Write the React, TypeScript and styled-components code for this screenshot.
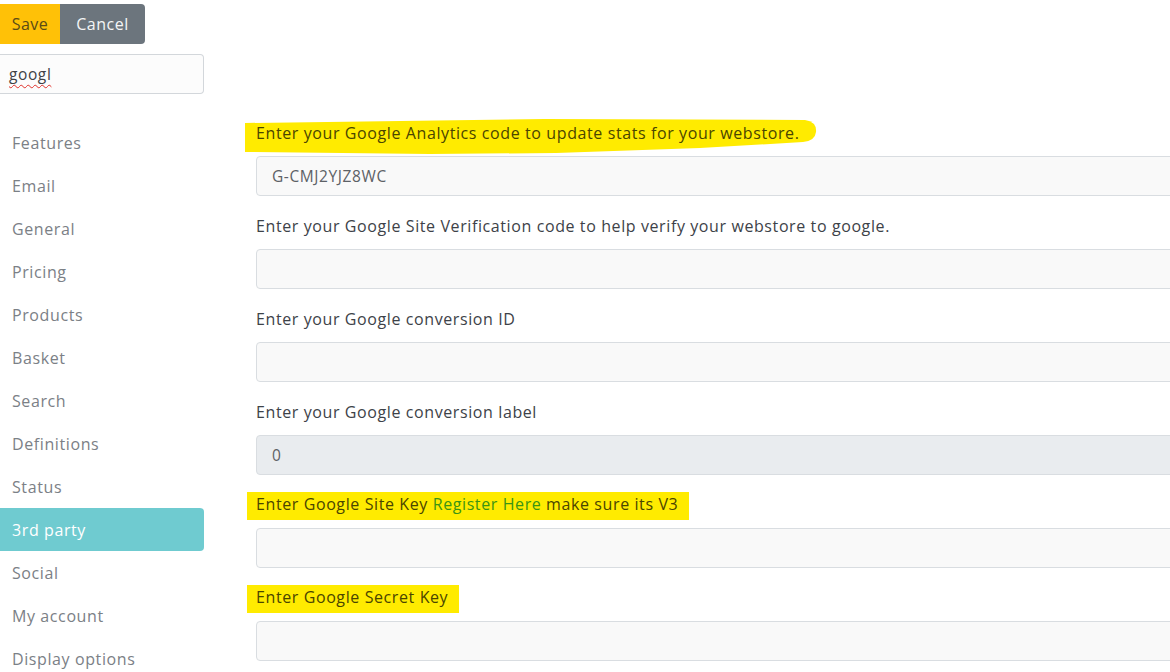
import React from "react";
import styled, { createGlobalStyle } from "styled-components";

const Global = createGlobalStyle`
  html, body { margin: 0; padding: 0; background: #ffffff; overflow: hidden; }
  body { font-family: "Open Sans", "Noto Sans", sans-serif; letter-spacing: 0.6px; }
  * { box-sizing: border-box; }
`;

const Page = styled.div`
  display: flex;
  align-items: flex-start;
  width: 1170px;
  height: 672px;
  overflow: hidden;
`;

const Sidebar = styled.aside`
  width: 204px;
  flex: none;
  display: flex;
  flex-direction: column;
  padding-top: 4px;
  & > * { flex-shrink: 0; }
`;

const ButtonGroup = styled.div`
  display: flex;
  height: 40px;
`;

const Btn = styled.button<{ $variant: "warning" | "secondary" }>`
  height: 40px;
  border: none;
  font-family: inherit;
  letter-spacing: 0.5px;
  font-size: 16px;
  padding: 0;
  cursor: pointer;
  width: ${(p) => (p.$variant === "warning" ? "60px" : "85px")};
  background: ${(p) => (p.$variant === "warning" ? "#ffc107" : "#6c757d")};
  color: ${(p) => (p.$variant === "warning" ? "#5a4b16" : "#f4f5f6")};
  border-radius: ${(p) => (p.$variant === "warning" ? "0" : "0 4px 4px 0")};
`;

const SearchBox = styled.div`
  margin-top: 10px;
  height: 40px;
  width: 204px;
  border: 1px solid #d3d7db;
  border-left: none;
  border-radius: 0 4px 4px 0;
  background: #fcfcfc;
  padding: 0 0 0 9px;
  display: flex;
  align-items: center;
  font-size: 15.5px;
  color: #3f4246;
`;

const Misspelled = styled.span`
  text-decoration: underline wavy #e0302a;
  text-decoration-thickness: 1px;
  text-underline-offset: 4px;
`;

const Nav = styled.nav`
  margin-top: 27px;
  display: flex;
  flex-direction: column;
`;

const NavItem = styled.a<{ $active?: boolean }>`
  height: 43px;
  flex: none;
  display: flex;
  align-items: center;
  padding-left: 12px;
  font-size: 16px;
  text-decoration: none;
  color: ${(p) => (p.$active ? "#ffffff" : "#7b8086")};
  background: ${(p) => (p.$active ? "#6fcbd0" : "transparent")};
  border-radius: 0 4px 4px 0;
`;

const Main = styled.main`
  flex: none;
  width: 1000px;
  padding: 122px 0 0 52px;
  display: flex;
  flex-direction: column;
`;

const Field = styled.div`
  display: flex;
  flex-direction: column;
  margin-bottom: 19px;
`;

const LabelRow = styled.div`
  position: relative;
  height: 23px;
  margin-bottom: 11px;
  display: flex;
  align-items: center;
`;

const Label = styled.label<{ $marked?: boolean }>`
  position: relative;
  z-index: 1;
  font-size: 16px;
  line-height: 23px;
  color: ${(p) => (p.$marked ? "#4a4500" : "#3d4248")};
`;

const Marker = styled.span`
  position: relative;
  z-index: 1;
  display: inline-block;
  background: #ffeb00;
  margin-left: -9px;
  padding: 1px 11px 4px 9px;
  line-height: 23px;
  font-size: 16px;
  color: #4a4500;
`;

const Link = styled.a`
  color: #3b9414;
  text-decoration: none;
`;

const Stroke = styled.svg`
  position: absolute;
  left: -11px;
  top: -4px;
  width: 580px;
  height: 40px;
  overflow: visible;
  z-index: 0;
`;

const TextInput = styled.input<{ $disabled?: boolean }>`
  height: 40px;
  width: 100%;
  border: 1px solid #d9dde1;
  border-radius: 4px;
  background: ${(p) => (p.$disabled ? "#e9ecef" : "#f9f9f9")};
  padding: 0 15px;
  font-family: inherit;
  letter-spacing: 0.6px;
  font-size: 15.5px;
  color: #5d6166;
  outline: none;
`;

const navItems = [
  "Features",
  "Email",
  "General",
  "Pricing",
  "Products",
  "Basket",
  "Search",
  "Definitions",
  "Status",
  "3rd party",
  "Social",
  "My account",
  "Display options",
];

export default function App() {
  return (
    <>
      <Global />
      <Page>
        <Sidebar>
          <ButtonGroup>
            <Btn $variant="warning">Save</Btn>
            <Btn $variant="secondary">Cancel</Btn>
          </ButtonGroup>
          <SearchBox role="searchbox">
            <Misspelled>googl</Misspelled>
          </SearchBox>
          <Nav>
            {navItems.map((n) => (
              <NavItem key={n} $active={n === "3rd party"} href="#">
                {n}
              </NavItem>
            ))}
          </Nav>
        </Sidebar>
        <Main>
          <Field>
            <LabelRow>
              <Stroke viewBox="0 0 580 40">
                <path
                  d="M0 5 L300 1 L560 2 Q572 4 571 14 Q570 23 558 24 L455 30 L311 35 L185 36 L0 34 Z"
                  fill="#ffeb00"
                />
              </Stroke>
              <Label $marked>Enter your Google Analytics code to update stats for your webstore.</Label>
            </LabelRow>
            <TextInput defaultValue="G-CMJ2YJZ8WC" />
          </Field>
          <Field>
            <LabelRow>
              <Label>Enter your Google Site Verification code to help verify your webstore to google.</Label>
            </LabelRow>
            <TextInput />
          </Field>
          <Field>
            <LabelRow>
              <Label>Enter your Google conversion ID</Label>
            </LabelRow>
            <TextInput />
          </Field>
          <Field>
            <LabelRow>
              <Label>Enter your Google conversion label</Label>
            </LabelRow>
            <TextInput $disabled defaultValue="0" readOnly />
          </Field>
          <Field>
            <LabelRow>
              <Marker>
                Enter Google Site Key <Link href="#">Register Here</Link> make sure its V3
              </Marker>
            </LabelRow>
            <TextInput />
          </Field>
          <Field>
            <LabelRow>
              <Marker>Enter Google Secret Key</Marker>
            </LabelRow>
            <TextInput />
          </Field>
        </Main>
      </Page>
    </>
  );
}
